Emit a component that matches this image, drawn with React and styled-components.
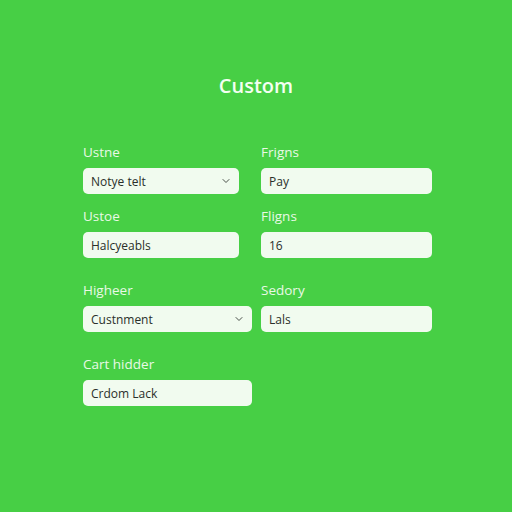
import React from 'react';
import styled, { createGlobalStyle } from 'styled-components';
import { ChevronDown } from 'lucide-react';

const GlobalStyle = createGlobalStyle`
  html, body {
    margin: 0;
    padding: 0;
    background: #47cf45;
  }
  body {
    font-family: "Open Sans", "Noto Sans", sans-serif;
  }
`;

const rows = [
  {
    columns: '156px 171px',
    gap: 22,
    top: 0,
    fields: [
      { label: 'Ustne', value: 'Notye telt', select: true },
      { label: 'Frigns', value: 'Pay' },
    ],
  },
  {
    columns: '156px 171px',
    gap: 22,
    top: 14,
    fields: [
      { label: 'Ustoe', value: 'Halcyeabls' },
      { label: 'Fligns', value: '16' },
    ],
  },
  {
    columns: '169px 171px',
    gap: 9,
    top: 24,
    fields: [
      { label: 'Higheer', value: 'Custnment', select: true },
      { label: 'Sedory', value: 'Lals' },
    ],
  },
  {
    columns: '169px',
    gap: 0,
    top: 24,
    fields: [{ label: 'Cart hidder', value: 'Crdom Lack' }],
  },
];

const Page = styled.div`
  width: 512px;
  height: 512px;
  background: #47cf45;
  display: flex;
  flex-direction: column;
  padding: 74px 0 0 83px;
  box-sizing: border-box;
`;

const Title = styled.h1`
  margin: 0 0 46px;
  width: 346px;
  text-align: center;
  font-size: 20px;
  line-height: 24px;
  font-weight: 600;
  color: #f4fff2;
`;

const Row = styled.div`
  display: grid;
  grid-template-columns: ${p => p.$columns};
  column-gap: ${p => p.$gap}px;
  margin-top: ${p => p.$top}px;
`;

const Field = styled.div`
  display: flex;
  flex-direction: column;
  gap: 8px;
`;

const Label = styled.label`
  font-size: 13.5px;
  line-height: 16px;
  color: #e9f9e6;
`;

const Input = styled.div`
  height: 26px;
  border-radius: 5px;
  background: #f1fbef;
  display: flex;
  align-items: center;
  justify-content: space-between;
  padding: 0 7px 0 8px;
  font-size: 12px;
  color: #2a2f2a;
  box-sizing: border-box;
`;

const Chevron = styled(ChevronDown)`
  color: #4a504a;
`;

export default function App() {
  return (
    <>
      <GlobalStyle />
      <Page>
        <Title>Custom</Title>
        {rows.map((row, i) => (
          <Row key={i} $columns={row.columns} $gap={row.gap} $top={row.top}>
            {row.fields.map(f => (
              <Field key={f.label}>
                <Label>{f.label}</Label>
                <Input>
                  <span>{f.value}</span>
                  {f.select && <Chevron size={12} strokeWidth={2} />}
                </Input>
              </Field>
            ))}
          </Row>
        ))}
      </Page>
    </>
  );
}
